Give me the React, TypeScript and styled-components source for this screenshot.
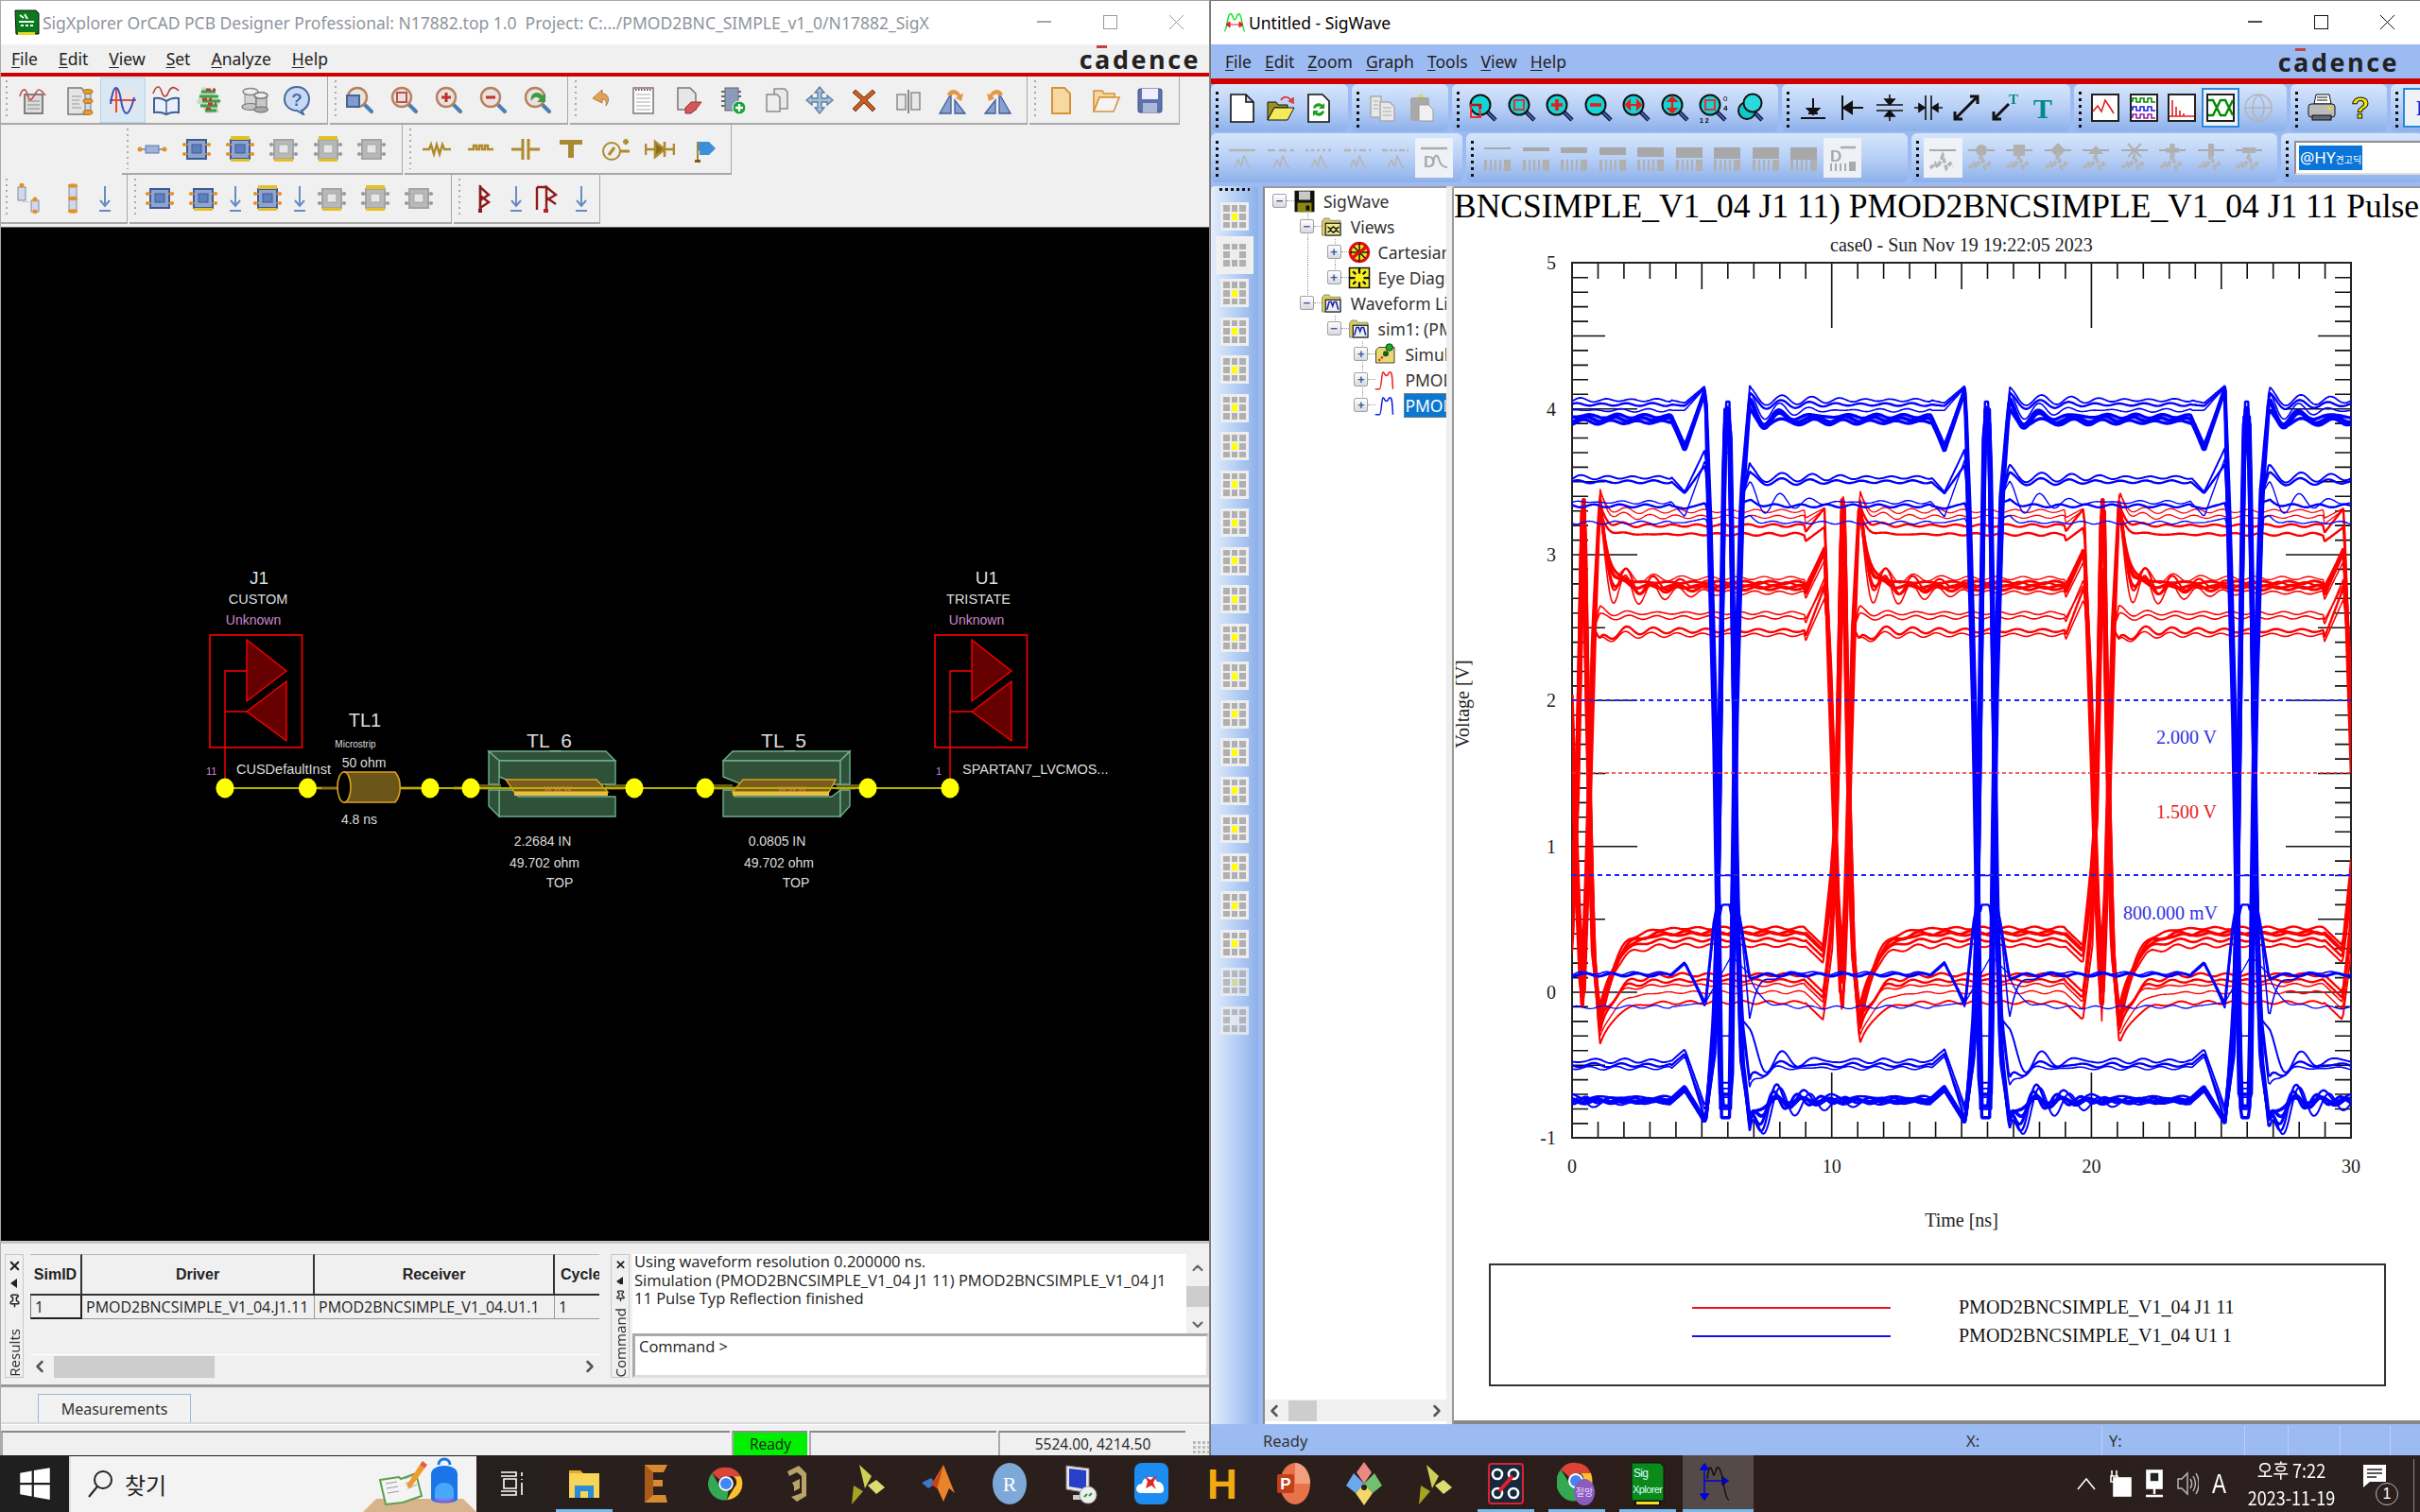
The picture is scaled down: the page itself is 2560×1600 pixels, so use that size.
import React from "react";
import styled, { createGlobalStyle } from "styled-components";
import { ChevronLeft, ChevronRight, ChevronUp, ChevronDown, Pin, X } from "lucide-react";

const SANS = `"Liberation Sans", Arial, sans-serif`;
const UI = `"Noto Sans", "Noto Sans CJK KR", sans-serif`;
const SERIF = `"Liberation Serif", "Times New Roman", serif`;
const BLUE = "#9dbbf3";

const GlobalStyle = createGlobalStyle`
  html, body { margin: 0; padding: 0; background: #000; }
  #root { width: 2560px; height: 1600px; overflow: hidden; }
  * { box-sizing: border-box; }
`;

// ---------- waveform data ----------
type Key = [number, number];
type Trace = { phase: number; base: number; a: number; p: number; t: number; tau?: number; keys: Key[]; w: number; seed: number };

const PX = (t: number) => 1662 + t * 27.47;
const PY = (v: number) => 1050 - v * 154.33;

function sample(tr: Trace, t: number) {
  const s = (((t - tr.phase) % 10) + 10) % 10;
  const k = tr.keys;
  if (s < k[0][0]) {
    const fade = Math.min(1, (k[0][0] - s) / 1.5);
    return (
      tr.base +
      (tr.a * Math.exp(-s / 1.7) * Math.cos((2 * Math.PI * s) / tr.p) + tr.t * Math.exp(-s / (tr.tau ?? 0.3))) * fade +
      0.01 * Math.sin(t * 6.3 + tr.seed)
    );
  }
  for (let i = 0; i < k.length - 1; i++) {
    if (s <= k[i + 1][0]) {
      const f = (s - k[i][0]) / (k[i + 1][0] - k[i][0]);
      return k[i][1] + (k[i + 1][1] - k[i][1]) * f;
    }
  }
  return k[k.length - 1][1];
}

function tracePath(tr: Trace) {
  let d = "";
  for (let t = 0; t <= 30; t += 0.06) {
    d += `${d ? "L" : "M"}${PX(t).toFixed(1)} ${PY(sample(tr, t)).toFixed(1)}`;
  }
  return d;
}

let seedNo = 1;
const jitter = () => ((seedNo % 5) - 2) * 0.025;
const blueHi = (H: number, a: number, dip: number, pre: number, bot: number, w: number): Trace => {
  const j = jitter();
  const peak = Math.min(4.17, H + pre);
  const mix = (v: number) => Math.min(v, peak);
  return {
    phase: 6.84, base: H, a, p: 1.2, t: 0.04, w, seed: seedNo++,
    keys: [
      [7, H], [7.5, H + dip], [8.3, peak], [8.45 + j, mix(3.2)], [8.66 + j, mix(1.8)], [8.78 + j, mix(0.5)], [8.88 + j, bot],
      [9.28 - j, bot], [9.36 - j, mix(0.5)], [9.48 - j, mix(2)], [9.71 - j, mix(3.4)], [10, H + a + 0.04],
    ],
  };
};
const blueLo = (L: number, a: number, p: number, dip: number, top: number, end: number, w: number): Trace => {
  const j = jitter();
  const low = top > 1;
  return {
    phase: 6.84, base: L, a, p, t: end - L - a, w, seed: seedNo++,
    keys: low
      ? [
          [7, L], [7.5, L + 0.08], [8.3, L + dip], [8.64 + j, L + 0.35], [8.78 + j, 0.6], [8.92 + j, 2.4], [9.06 + j, top],
          [9.22 - j, top], [9.36 - j, 2.4], [9.5 - j, 0.6], [9.68 - j, L + 0.3], [10, end],
        ]
      : [[7, L], [8.3, L + 0.03], [9.3, top], [10, end]],
  };
};
const redHi = (H: number, a: number, pre: number, bot: number, end: number, w: number): Trace => {
  const j = jitter();
  return {
    phase: 1.07, base: H, a, p: 1.02, t: end - H - a, w, seed: seedNo++,
    keys: [
      [7.9, H - 0.05], [8.65, H + pre], [8.85 + j, 2.2], [9 + j, 1.4], [9.15 + j, 0.6], [9.3 + j, bot], [9.36 - j, bot],
      [9.5 - j, 0.7], [9.62 - j, 1.5], [9.78 - j, 2.5], [10, end],
    ],
  };
};
const redLo = (L: number, top: number, end: number, w: number): Trace => {
  const j = jitter();
  return {
    phase: 1.07, base: L, a: 0.025, p: 1.1, t: end - L - 0.025, tau: 0.55, w, seed: seedNo++,
    keys: [
      [7.9, L], [8.6, L - 0.12], [8.95 + j, L + 0.4], [9.1 + j, 1.2], [9.22 + j, 2.2], [9.33 + j, top], [9.4 - j, top],
      [9.5 - j, 2.2], [9.62 - j, 1.2], [9.75 - j, 0.3], [10, end],
    ],
  };
};

const redTraces: Trace[] = [
  redHi(3.3, 0.02, 0.02, -0.1, 3.42, 1.3),
  redHi(3.26, 0.03, 0.05, 0.1, 3.45, 1.3),
  redHi(3.2, 0.03, 0.12, 0.05, 3.35, 2.4),
  redHi(3.14, 0.03, 0.05, -0.05, 3.3, 2.4),
  redHi(2.84, 0.1, 0.2, 0, 3.38, 1.4),
  redHi(2.8, 0.16, 0.25, -0.1, 3.42, 2.2),
  redHi(2.77, 0.08, 0.26, 0.1, 3.36, 3),
  redHi(2.74, 0.18, 0.22, -0.2, 3.3, 1.6),
  redHi(2.78, 0.03, 0.24, 0.2, 3.4, 3.4),
  redHi(2.81, 0.02, 0.24, 0, 3.4, 3),
  redHi(2.6, 0.04, 0.2, -0.1, 2.66, 1.6),
  redHi(2.57, 0.02, 0.27, 0.1, 2.6, 1.6),
  redHi(2.48, 0.04, 0.3, 0, 2.42, 2.4),
  redHi(2.45, 0.03, 0.25, 0.15, 2.42, 1.6),
  redLo(0.44, 3.3, -0.2, 2.4),
  redLo(0.4, 3.38, -0.26, 3),
  redLo(0.36, 3.2, -0.1, 2.6),
  redLo(0.32, 3.4, -0.12, 2),
  redLo(0.12, 3.0, -0.28, 2.4),
  redLo(0.08, 3.3, -0.2, 2.4),
  redLo(0.05, 2.9, -0.16, 1.6),
  redLo(-0.0, 3.1, -0.3, 1.4),
  redLo(-0.07, 3.3, -0.35, 2),
  redLo(0.41, 3.35, -0.2, 3.2),
];

const blueTraces: Trace[] = [
  blueHi(4.06, 0.06, -0.02, 0.1, -0.72, 1.8),
  blueHi(4.03, 0.04, -0.01, 0.12, -0.8, 2.4),
  blueHi(3.99, 0.08, 0, 0.16, -0.66, 1.6),
  blueHi(3.95, 0.08, -0.2, 0.18, -0.86, 3.4),
  blueHi(3.93, 0.1, -0.22, 0.2, -0.78, 4),
  blueHi(3.91, 0.06, -0.18, 0.24, -0.7, 3.4),
  blueHi(3.53, 0.06, -0.1, 0.2, -0.62, 2),
  blueHi(3.5, 0.03, -0.08, 0.12, -0.7, 2.4),
  blueHi(3.36, 0.1, -0.1, 0.3, -0.3, 1.4),
  blueHi(3.335, 0, -0.02, 0.02, 0.6, 2.4),
  blueHi(3.22, 0.01, 0, 0.03, 0.8, 1.4),
  blueLo(0.12, 0.0, 1, -0.2, 4.0, 0.1, 3),
  blueLo(0.13, 0.03, 2, -0.24, 3.9, -0.18, 1.6),
  blueLo(-0.1, 0.03, 7, 0.03, 0.25, 0.12, 1.3),
  blueLo(-0.47, 0.12, 1.3, -0.32, 3.9, -0.25, 2),
  blueLo(-0.5, 0.06, 1.3, -0.38, 3.95, -0.6, 2.4),
  blueLo(-0.52, 0.04, 1.2, -0.3, 3.7, -0.65, 1.6),
  blueLo(-0.72, 0.2, 1.06, -0.15, 4.05, -0.95, 2.4),
  blueLo(-0.74, 0.14, 0.94, -0.15, 3.95, -0.88, 3),
  blueLo(-0.76, 0.22, 1.16, -0.14, 4.02, -0.9, 2),
  blueLo(-0.75, 0.08, 1.0, -0.15, 3.9, -0.86, 3.6),
  blueLo(-0.74, 0.02, 1.0, -0.15, 3.85, -0.9, 3.6),
];

function tickPaths() {
  let d = "";
  for (let i = 1; i < 60; i++) {
    const y = PY(i / 10 - 1).toFixed(1);
    const len = i % 10 === 0 ? 69 : i % 5 === 0 ? 35 : 17;
    d += `M1662 ${y}h${len}M2486 ${y}h-${len}`;
  }
  for (let i = 1; i < 30; i++) {
    const x = PX(i).toFixed(1);
    const len = i % 10 === 0 ? 69 : i % 5 === 0 ? 28 : 17;
    d += `M${x} 278v${len}M${x} 1204v-${len}`;
  }
  return d;
}

// ---------- small drawings ----------
const Svg = styled.svg<{ $s?: number }>`
  width: ${(p) => p.$s ?? 32}px;
  height: ${(p) => p.$s ?? 32}px;
  display: block;
  flex: none;
  filter: blur(0.35px);
`;

const magL = (inner: React.ReactNode) => (
  <>
    <path d="M19 19l9 9" stroke="#4d7eb5" strokeWidth="4" strokeLinecap="round" />
    <circle cx="13" cy="13" r="10" fill="#e9e3df" stroke="#b8805c" strokeWidth="2.4" />
    {inner}
  </>
);
const magR = (inner: React.ReactNode) => (
  <>
    <path d="M19 19l10 10" stroke="#111" strokeWidth="4.5" />
    <path d="M19 19l10 10" stroke="#3c5fd0" strokeWidth="2" />
    <circle cx="13" cy="13" r="10.5" fill="#14d4d4" stroke="#111" strokeWidth="2" />
    {inner}
  </>
);
const chip = (c: string, bar: string, pos: "t" | "b" | "tb" | "" = "") => {
  const body = c === "b" ? "#8fa4cf" : "#b8b8b8";
  const line = c === "b" ? "#3e5a94" : "#a4a4a4";
  const pad = c === "b" ? "#e0922a" : "#9a9a9a";
  return (
    <>
      <rect x="6" y="6" width="20" height="20" fill={body} stroke={line} strokeWidth="2" />
      <rect x="11" y="11" width="10" height="9" fill={c === "b" ? "#5f7fbf" : "#e6e6e6"} stroke={line} />
      <path d="M1 11h6M1 21h6M25 11h6M25 21h6" stroke={pad} strokeWidth="1.4" />
      <circle cx="3" cy="11" r="2" fill={pad} />
      <circle cx="3" cy="21" r="2" fill={pad} />
      <circle cx="29" cy="11" r="2" fill={pad} />
      <circle cx="29" cy="21" r="2" fill={pad} />
      {pos.includes("t") && <rect x="6" y="2" width="20" height="4" fill={bar} />}
      {pos.includes("b") && <rect x="6" y="26" width="20" height="3" fill={bar} />}
    </>
  );
};
const vWave = "M8 26c2-1 3-8 4-8s2 7 3 7 2-11 3-11 3 9 5 11 2 2 3 2";
const lineWave = (top: React.ReactNode) => (
  <>
    {top}
    <path d={vWave} fill="none" stroke="#b4b4b4" strokeWidth="1.6" />
  </>
);
const widthIcon = (h: number) => (
  <>
    <rect x="2" y={5} width="28" height={h} fill="#a8a8a8" />
    <path d="M2 18h3v12H2zM8 18h2v12H8zM13 18h2v12h-2zM18 18h2v12h-2zM23 18h7v12h-7z" fill="#b0b0b0" />
  </>
);
const symbolWave = (top: React.ReactNode) => (
  <>
    <path d="M2 8h28" stroke="#aaa" strokeWidth="2" />
    {top}
    <path d="M3 27l5-5 3 4 5-12 4 13 4-5 3 3" fill="none" stroke="#b4b4b4" strokeWidth="3.6" strokeDasharray="5 2" />
  </>
);

const ICONS: Record<string, React.ReactNode> = {
  noteWave: (
    <>
      <rect x="7" y="10" width="19" height="20" fill="#dcdcdc" stroke="#666" strokeWidth="1.6" />
      <path d="M10 17h13M10 21h13M10 25h13" stroke="#888" />
      <path d="M2 12c2-8 6-10 8-2s4 6 6 3 4-8 6-8 4 2 7 6" fill="none" stroke="#c0504d" strokeWidth="1.6" />
    </>
  ),
  docChip: (
    <>
      <path d="M4 3h14l5 5v23H4z" fill="#e4e4e4" stroke="#777" strokeWidth="1.5" />
      <path d="M8 12h10M8 16h8M8 20h8M8 24h10" stroke="#999" />
      <rect x="22" y="8" width="6" height="20" fill="#cfd8ee" stroke="#678" />
      <ellipse cx="25" cy="7" rx="5" ry="2.4" fill="#e8a02c" stroke="#a86a10" />
      <ellipse cx="25" cy="17" rx="5" ry="2.4" fill="#e8a02c" stroke="#a86a10" />
      <ellipse cx="25" cy="29" rx="5" ry="2.4" fill="#e8a02c" stroke="#a86a10" />
    </>
  ),
  sine: (
    <>
      <rect x="2" y="3" width="28" height="26" fill="#e6e6e6" />
      <path d="M2 16h28" stroke="#e8493a" strokeWidth="2" />
      <path d="M9 3v26" stroke="#e8493a" strokeWidth="2" />
      <path d="M3 20c3-22 8-22 11-4s8 20 14-3" fill="none" stroke="#2f54c4" strokeWidth="2" />
    </>
  ),
  book: (
    <>
      <path d="M3 14c5-1 9 0 13 3 4-3 8-4 13-3v15c-5-1-9 0-13 2-4-2-8-3-13-2z" fill="#eaf0fa" stroke="#3e5f98" strokeWidth="2" />
      <path d="M16 17v13" stroke="#3e5f98" strokeWidth="1.5" />
      <path d="M2 9c3-9 7-9 9-2s5 6 7 1 5-8 11-2" fill="none" stroke="#b4443c" strokeWidth="1.6" />
    </>
  ),
  stack: (
    <>
      <path d="M8 2l14 4-2 6 8 4-4 7 2 6-14 1-4-8-6-3 3-8z" fill="#c7d9c0" />
      <path d="M7 7h15M5 12h20M8 17h19M6 22h18M11 27h12" stroke="#3aa04a" strokeWidth="3" />
      <path d="M12 5h10M8 15h10M14 20h9M12 25h7" stroke="#b83c34" strokeWidth="3" strokeDasharray="5 2" />
    </>
  ),
  spools: (
    <>
      <path d="M7 7v15c0 3 12 3 12 0V7" fill="#d4d4d4" stroke="#888" />
      <ellipse cx="13" cy="7" rx="8" ry="3.5" fill="#eee" stroke="#888" strokeWidth="1.5" />
      <ellipse cx="13" cy="23" rx="9" ry="3.5" fill="#c4c4c4" stroke="#777" strokeWidth="1.2" />
      <path d="M19 11v15c0 3 11 3 11 0V11" fill="#c8c8c8" stroke="#666" />
      <ellipse cx="24" cy="11" rx="7" ry="3.2" fill="#eee" stroke="#777" strokeWidth="1.5" />
      <ellipse cx="24" cy="26" rx="7.5" ry="3" fill="#a8a8a8" stroke="#666" />
    </>
  ),
  help: (
    <>
      <path d="M16 2c8 0 13 6 13 13s-5 11-8 12l2 4-7-4C9 27 3 22 3 15S8 2 16 2z" fill="#c9d9f3" stroke="#46699e" strokeWidth="2" />
      <text x="16" y="22" textAnchor="middle" fontFamily={SANS} fontWeight="700" fontSize="19" fill="#476fa8">?</text>
    </>
  ),
  zArea: magL(<rect x="2" y="11" width="13" height="12" fill="#7f9ccc" stroke="#45639a" strokeWidth="2" />),
  zBox: magL(<rect x="8" y="8" width="10" height="10" fill="none" stroke="#c0504d" strokeWidth="2" />),
  zIn: magL(<path d="M8 13h10M13 8v10" stroke="#c0302a" strokeWidth="3" />),
  zOut: magL(<path d="M8 13h10" stroke="#c0302a" strokeWidth="3" />),
  zBack: magL(<path d="M9 17c-2-8 6-12 12-6l3-2v9h-9l3-3c-3-4-7-2-9 2z" fill="#3f9a44" />),
  undo: <path d="M20 5L10 14l10 5v-4c4 0 5 3 4 7 5-7 2-13-4-13z" fill="#e2a25b" stroke="#b37636" />,
  notes: (
    <>
      <rect x="6" y="3" width="21" height="27" fill="#fff" stroke="#777" strokeWidth="1.5" />
      <path d="M9 10h15M9 14h15M9 18h15M9 22h15M9 26h15" stroke="#aaa" />
      <path d="M8 5h17" stroke="#8f3b52" strokeWidth="2" strokeDasharray="1.5 1.5" />
    </>
  ),
  erase: (
    <>
      <path d="M6 3h13l6 6v17H6z" fill="#e6e6e6" stroke="#777" strokeWidth="1.5" />
      <path d="M14 24l6-6h11l-6 8-5 4H14z" fill="#d2565a" stroke="#9a3033" />
    </>
  ),
  addChip: (
    <>
      <rect x="9" y="3" width="14" height="24" fill="#8a9cba" stroke="#666" />
      <path d="M5 7h4M5 12h4M5 17h4M5 22h4M23 7h3M23 12h3" stroke="#666" strokeWidth="2" />
      <circle cx="24" cy="24" r="7" fill="#18a338" stroke="#fff" />
      <path d="M20 24h8M24 20v8" stroke="#fff" strokeWidth="2.4" />
    </>
  ),
  copyDoc: (
    <>
      <path d="M14 4h11l3 3v18H14z" fill="#e8e8e8" stroke="#8a8a8a" strokeWidth="1.5" />
      <path d="M6 10h11l3 3v15H6z" fill="#eee" stroke="#8a8a8a" strokeWidth="1.5" />
    </>
  ),
  move: <path d="M16 2l5 6h-3v6h6v-3l6 5-6 5v-3h-6v6h3l-5 6-5-6h3v-6H8v3l-6-5 6-5v3h6V8h-3z" fill="#a8c0dc" stroke="#5a7da4" strokeWidth="1.3" />,
  del: <path d="M7 5l9 8 9-8 3 3-9 8 9 9-3 3-9-9-9 9-3-3 9-9-9-8z" fill="#c35f24" stroke="#7a3a15" />,
  mirror: (
    <>
      <path d="M4 10h9v16H4zM19 8h9v18h-9z" fill="#e8e8e8" stroke="#8a8a8a" strokeWidth="1.5" />
      <path d="M16 5v25" stroke="#666" strokeWidth="1.5" />
    </>
  ),
  rotL: (
    <>
      <path d="M14 9L2 30h12zM18 16l11 14H18z" fill="#86a0d0" stroke="#3f5d98" strokeWidth="1.3" />
      <path d="M10 10c2-6 10-7 14 0l3-1-2 8-6-3 2-2c-2-3-6-3-8 0z" fill="#e49a44" />
    </>
  ),
  rotR: (
    <>
      <path d="M18 9l12 21H18zM14 16L3 30h11z" fill="#86a0d0" stroke="#3f5d98" strokeWidth="1.3" />
      <path d="M22 10c-2-6-10-7-14 0l-3-1 2 8 6-3-2-2c2-3 6-3 8 0z" fill="#e49a44" />
    </>
  ),
  newL: <path d="M7 3h13l6 6v21H7z" fill="#f6d9a0" stroke="#d8913a" strokeWidth="2" />,
  openL: (
    <>
      <path d="M4 28V6h9l2 3h11v4H10L4 28z" fill="#f3d79f" stroke="#d8913a" strokeWidth="1.6" />
      <path d="M10 13h21l-6 15H4z" fill="#f4f4f4" stroke="#d8913a" strokeWidth="1.6" />
    </>
  ),
  saveL: (
    <>
      <rect x="4" y="4" width="25" height="25" rx="2" fill="#5e73ad" stroke="#3a4c88" />
      <rect x="8" y="4" width="17" height="11" fill="#eef" />
      <rect x="9" y="19" width="15" height="10" fill="#aab8d8" />
    </>
  ),
  wireChip: (
    <>
      <path d="M1 16h30" stroke="#8aa0c8" strokeWidth="2" />
      <rect x="9" y="12" width="14" height="8" fill="#9fb2d8" stroke="#5d7ab0" />
      <circle cx="3" cy="16" r="2.5" fill="#e0922a" />
      <circle cx="29" cy="16" r="2.5" fill="#e0922a" />
    </>
  ),
  chipB: chip("b", "#e3c02a"),
  chipBb: chip("b", "#e3c02a", "b"),
  chipBt: chip("b", "#e3c02a", "tb"),
  chipG: chip("g", "#e3c02a", "b"),
  chipGt: chip("g", "#e3c02a", "tb"),
  chipG0: chip("g", "#e3c02a"),
  res: <path d="M1 16h7l2-5 3 10 3-10 3 10 3-10 2 5h7" fill="none" stroke="#ae8a2a" strokeWidth="2.4" />,
  res2: <path d="M2 16h6v-4h3v4h3v-4h3v4h3v-4h3v4h6" fill="none" stroke="#ae8a2a" strokeWidth="2.4" />,
  cap: <path d="M1 16h12M13 5v22M19 5v22M19 16h12" fill="none" stroke="#ae8a2a" strokeWidth="3" />,
  gnd: <path d="M4 6h24v5H19v14h-6V11H4z" fill="#a98a34" />,
  xfmr: (
    <>
      <circle cx="12" cy="18" r="9" fill="none" stroke="#ae8a2a" strokeWidth="2" />
      <path d="M20 18h11M9 22l6-8M24 8h6M27 5v6" stroke="#ae8a2a" strokeWidth="3" />
    </>
  ),
  diode: <path d="M1 16h10M11 8l10 8-10 8zM21 8v16M21 16h10M1 10v12M31 10v12" fill="#8a6b1c" stroke="#ae8a2a" strokeWidth="2.6" />,
  flag: (
    <>
      <path d="M9 8h12l7 7-7 7H11v-5l-2 2z" fill="#3d8fd8" />
      <path d="M9 8v21" stroke="#9a8a38" strokeWidth="2" />
      <rect x="6" y="27" width="6" height="3" fill="#7a5a1e" />
    </>
  ),
  parDiag: (
    <>
      <rect x="4" y="4" width="8" height="14" fill="#cfd8ee" stroke="#889" />
      <rect x="18" y="18" width="8" height="12" fill="#cfd8ee" stroke="#889" />
      <circle cx="8" cy="2" r="2.5" fill="#e0922a" />
      <circle cx="22" cy="17" r="2.5" fill="#e0922a" />
      <circle cx="22" cy="30" r="2.5" fill="#e0922a" />
      <path d="M9 19c2 1 5 1 8 0" stroke="#aaa" strokeDasharray="2 2" fill="none" />
    </>
  ),
  serChip: (
    <>
      <rect x="12" y="2" width="8" height="28" fill="#cfd8ee" stroke="#889" />
      <ellipse cx="16" cy="2.5" rx="5" ry="2.2" fill="#e0922a" />
      <ellipse cx="16" cy="16" rx="5" ry="2.2" fill="#e0922a" />
      <ellipse cx="16" cy="29.500" rx="5" ry="2.2" fill="#e0922a" />
    </>
  ),
  down: <path d="M16 3v20M11 18l5 6 5-6M10 29h12" fill="none" stroke="#6a8cbc" strokeWidth="2" />,
  tri1: (
    <>
      <path d="M12 2v27" stroke="#8e1b1b" strokeWidth="2.4" />
      <path d="M12 4l9 8-9 6zM21 20l-9-7v13z" fill="none" stroke="#8e1b1b" strokeWidth="2.4" />
      <rect x="10" y="27" width="4" height="4" fill="#8e1b1b" />
    </>
  ),
  tri2: (
    <>
      <path d="M5 4h10v20M5 4v24M15 4l10 8-10 6zM25 22l-10-7v13" fill="none" stroke="#8e1b1b" strokeWidth="2.4" />
      <rect x="12" y="27" width="5" height="4" fill="#b52020" />
    </>
  ),
  // sigwave
  newDoc: <path d="M4 2h16l8 8v21H4zM20 2v8h8" fill="#fff" stroke="#111" strokeWidth="1.6" />,
  openDoc: (
    <>
      <path d="M2 29V10h9l2 3h10v3H9L2 29z" fill="#9c9020" stroke="#111" />
      <path d="M9 16h21l-7 13H2z" fill="#f4ea5c" stroke="#111" />
      <path d="M16 8c3-5 7-4 11 0l-2 1 4 2v-5l-2 1" fill="none" stroke="#e03030" strokeWidth="1.6" />
    </>
  ),
  refresh: (
    <>
      <path d="M5 2h15l7 7v22H5z" fill="#fff" stroke="#111" strokeWidth="1.6" />
      <path d="M10 16c1-5 7-6 10-3l2-2v6h-6l2-2c-2-1-5 0-6 2zM22 20c-1 5-7 6-10 3l-2 2v-6h6l-2 2c2 1 5 0 6-2z" fill="#1ea01e" />
    </>
  ),
  copyGray: (
    <>
      <path d="M3 4h11v22H3z" fill="#e8e8e8" stroke="#aaa" strokeWidth="1.5" />
      <path d="M13 10h10l5 5v15H13z" fill="#e8e8e8" stroke="#aaa" strokeWidth="1.5" />
      <path d="M16 16h9M16 20h9M16 24h9M6 9h5M6 13h5M6 17h5" stroke="#aaa" />
    </>
  ),
  pasteGray: (
    <>
      <rect x="4" y="5" width="20" height="25" rx="2" fill="#a8a8a8" />
      <path d="M11 5l4-4 4 4z" fill="#d8d84a" />
      <path d="M13 13h10l5 5v12H13z" fill="#f0f0f0" stroke="#999" />
    </>
  ),
  m1: magR(
    <>
      <path d="M12 13H3v13h10z" fill="none" stroke="#e53030" strokeWidth="2" />
      <path d="M3 13h10v4" stroke="#c01010" strokeWidth="2.5" fill="none" />
    </>
  ),
  m2: magR(<rect x="8" y="8" width="10" height="10" fill="none" stroke="#e53030" strokeWidth="2" />),
  m3: magR(<path d="M7 13h12M13 7v12" stroke="#e02020" strokeWidth="3.6" />),
  m4: magR(<path d="M7 13h12" stroke="#e02020" strokeWidth="3.6" />),
  m5: magR(<path d="M5 13h16M5 13l4-4v8zM21 13l-4-4v8z" stroke="#e02020" strokeWidth="2.2" fill="#e02020" />),
  m6: magR(<path d="M13 5v16M13 5l-4 4h8zM13 21l-4-4h8z" stroke="#e02020" strokeWidth="2.2" fill="#e02020" />),
  m7: (
    <>
      {magR(<rect x="8" y="8" width="10" height="10" fill="none" stroke="#e53030" strokeWidth="2" />)}
      <text x="27" y="9" fontSize="8" fontFamily={SANS}>0</text>
      <text x="27" y="19" fontSize="8" fontFamily={SANS} fontWeight="700">4</text>
      <text x="2" y="32" fontSize="7" fontFamily={SANS} fontWeight="700">1 2</text>
    </>
  ),
  m8: (
    <>
      <path d="M18 20l9 9" stroke="#111" strokeWidth="4.5" />
      <path d="M18 20l9 9" stroke="#3c5fd0" strokeWidth="2" />
      <circle cx="11" cy="19" r="9" fill="#14c8c8" stroke="#111" strokeWidth="2" />
      <circle cx="17" cy="11" r="9.5" fill="#2adada" stroke="#111" strokeWidth="2" />
    </>
  ),
  cLow: <path d="M16 6v16M10 17l6 6 6-6zM3 27h26M11 22h10" fill="#111" stroke="#111" strokeWidth="2" />,
  cLeft: <path d="M6 3v26M7 16l9-6v12zM16 16h12" fill="#111" stroke="#111" strokeWidth="2" />,
  cH: <path d="M2 13h28M2 19h28M16 2v9M16 21v9M11 7l5 6 5-6zM11 25l5-6 5 6z" fill="#111" stroke="#111" strokeWidth="1.6" />,
  cV: <path d="M13 3v26M19 3v26M1 16h10M21 16h10M6 12l6 4-6 4zM26 12l-6 4 6 4z" fill="#111" stroke="#111" strokeWidth="1.6" />,
  cDiag: <path d="M4 28L28 4M20 4h8v8M4 20v8h8" fill="none" stroke="#111" strokeWidth="3" />,
  cDiagT: (
    <>
      <path d="M4 28l16-16M4 20v8h8" fill="none" stroke="#111" strokeWidth="3" />
      <text x="20" y="12" fontFamily={SERIF} fontWeight="700" fontSize="15" fill="#008a8a">T</text>
    </>
  ),
  tText: <text x="16" y="27" textAnchor="middle" fontFamily={SERIF} fontWeight="700" fontSize="30" fill="#008a8a">T</text>,
  gWave: (
    <>
      <rect x="2" y="2" width="28" height="28" fill="#fff" stroke="#222" strokeWidth="2" />
      <path d="M3 20l5-6 4 6 4-12 4 6 5 8" fill="none" stroke="#e02020" strokeWidth="1.6" />
    </>
  ),
  gBus: (
    <>
      <rect x="2" y="2" width="28" height="28" fill="#fff" stroke="#222" strokeWidth="2" />
      <path d="M4 10V6h4v4h4V6h4v4h4V6h4v4h4" fill="none" stroke="#008a00" strokeWidth="1.6" />
      <path d="M4 19v-4h4v4h4v-4h4v4h4v-4h4v4h4" fill="none" stroke="#2020e0" strokeWidth="1.6" />
      <path d="M4 27v-4h4v4h4v-4h4v4h4v-4h4v4h4" fill="none" stroke="#9020a0" strokeWidth="1.6" />
    </>
  ),
  gSpec: (
    <>
      <rect x="2" y="2" width="28" height="28" fill="#fff" stroke="#222" strokeWidth="2" />
      <path d="M3 25h26M6 25V8M10 25V15M14 25v-6M18 25v-3" stroke="#e02020" strokeWidth="1.6" />
    </>
  ),
  gEye: (
    <>
      <rect x="2" y="2" width="28" height="28" fill="#fff" stroke="#222" strokeWidth="2" />
      <path d="M3 8h5l8 16h5l8-16M3 24h5l8-16h5l8 16" fill="none" stroke="#008a00" strokeWidth="2.4" />
    </>
  ),
  gPolar: (
    <g fill="none" stroke="#b4b4b4" strokeWidth="1.5">
      <circle cx="16" cy="16" r="14" />
      <path d="M2 16h28M16 2c-8 8-8 20 0 28M16 2c8 8 8 20 0 28" />
    </g>
  ),
  print: (
    <>
      <path d="M10 2h14l2 10H8z" fill="#fff" stroke="#111" />
      <path d="M11 5h11M11 8h11" stroke="#111" />
      <rect x="2" y="12" width="28" height="14" rx="3" fill="#bbb" stroke="#111" />
      <rect x="6" y="24" width="20" height="5" fill="#667" stroke="#111" />
      <rect x="22" y="15" width="5" height="3" fill="#e8d820" />
    </>
  ),
  qHelp: <text x="16" y="27" textAnchor="middle" fontFamily={SANS} fontWeight="700" fontSize="32" fill="#f2e400" stroke="#111">?</text>,
  r: <text x="10" y="24" fontFamily={SERIF} fontWeight="700" fontSize="24" fill="#2020e0">R</text>,
  dash1: lineWave(<path d="M2 8h28" stroke="#b4b4b4" strokeWidth="2.4" />),
  dash2: lineWave(<path d="M2 8h28" stroke="#b4b4b4" strokeWidth="2.4" strokeDasharray="8 4" />),
  dash3: lineWave(<path d="M2 8h28" stroke="#b4b4b4" strokeWidth="2.4" strokeDasharray="3 3" />),
  dash4: lineWave(<path d="M2 8h28" stroke="#b4b4b4" strokeWidth="2.4" strokeDasharray="7 3 3 3" />),
  dash5: lineWave(<path d="M2 8h28" stroke="#b4b4b4" strokeWidth="2.4" strokeDasharray="6 2 3 2 3 2" />),
  dW: (
    <>
      <path d="M2 6h28" stroke="#aaa" strokeWidth="2.4" />
      <text x="5" y="26" fontFamily={SANS} fontWeight="700" fontSize="17" fill="#aaa">D</text>
      <path d="M15 20c3-12 6-4 7 0s5 6 8 6" fill="none" stroke="#aaa" strokeWidth="2" />
    </>
  ),
  w1: widthIcon(2),
  w2: widthIcon(4),
  w3: widthIcon(6),
  w4: widthIcon(8),
  w5: widthIcon(10),
  w6: widthIcon(11),
  w7: widthIcon(12),
  w8: widthIcon(12),
  w9: widthIcon(13),
  dD: (
    <>
      <path d="M14 5h16" stroke="#aaa" strokeWidth="2.4" />
      <text x="3" y="20" fontFamily={SANS} fontWeight="700" fontSize="17" fill="#aaa">D</text>
      <path d="M3 22h2v8H3zM8 22h2v8H8zM13 22h2v8h-2zM18 22h2v8h-2zM23 20h7v10h-7z" fill="#aaa" />
    </>
  ),
  sLine: symbolWave(null),
  sCircle: symbolWave(<circle cx="16" cy="8" r="6" fill="#b0b0b0" />),
  sSquare: symbolWave(<rect x="10" y="2" width="12" height="12" fill="#b0b0b0" />),
  sDia: symbolWave(<path d="M16 0l8 8-8 8-8-8z" fill="#b0b0b0" />),
  sTri: symbolWave(<path d="M8 12l8-9 8 9z" fill="#b0b0b0" />),
  sX: symbolWave(<path d="M9 1l14 14M23 1L9 15" stroke="#b0b0b0" strokeWidth="2.2" />),
  sPlus: symbolWave(<path d="M16 1v14M9 8h14" stroke="#b0b0b0" strokeWidth="5" />),
  sBar: symbolWave(<rect x="13" y="1" width="6" height="14" fill="#b0b0b0" />),
  sMinus: symbolWave(<rect x="9" y="5" width="14" height="6" fill="#b0b0b0" />),
};

const Icon = ({ name, size }: { name: string; size?: number }) => (
  <Svg $s={size} viewBox="0 0 32 32">
    {ICONS[name]}
  </Svg>
);

// ---------- layout ----------
const Desktop = styled.div`
  width: 2560px;
  height: 1600px;
  display: flex;
  flex-direction: column;
  font-family: ${SANS};
`;
const Windows = styled.div`
  display: flex;
  height: 1540px;
`;
const LeftWin = styled.div`
  width: 1280px;
  display: flex;
  flex-direction: column;
  background: #f0f0f0;
  border-top: 1px solid #aaa;
  border-left: 1px solid #aaa;
  border-right: 1px solid #888;
`;
const RightWin = styled.div`
  width: 1280px;
  display: flex;
  flex-direction: column;
  background: ${BLUE};
  border-top: 1px solid #777;
  border-left: 1px solid #777;
`;
const TitleBar = styled.div`
  height: 46px;
  flex: none;
  background: #fff;
  display: flex;
  align-items: center;
  padding-left: 13px;
`;
const TitleText = styled.span<{ $dim?: boolean }>`
  font-family: ${UI};
  font-size: 17.5px;
  margin-left: 3px;
  white-space: pre;
  color: ${(p) => (p.$dim ? "#8f959c" : "#000")};
`;
const Caption = styled.div<{ $dim?: boolean }>`
  margin-left: auto;
  margin-right: 27px;
  display: flex;
  align-items: center;
  gap: 55px;
  margin-top: -2px;
  color: ${(p) => (p.$dim ? "#a0a0a0" : "#000")};
`;
const MenuBar = styled.div<{ $h: number; $bg: string; $pad: number }>`
  height: ${(p) => p.$h}px;
  flex: none;
  background: ${(p) => p.$bg};
  display: flex;
  align-items: center;
  padding-left: ${(p) => p.$pad}px;
`;
const MenuItem = styled.span<{ $gap: number }>`
  font-family: ${UI};
  font-size: 17.5px;
  color: #222;
  margin-right: ${(p) => p.$gap}px;
`;
const Key = styled.span`
  text-decoration: underline;
  text-underline-offset: 2px;
`;
const Logo = styled.span<{ $right: number; $top: number }>`
  position: relative;
  margin-left: auto;
  margin-right: ${(p) => p.$right}px;
  margin-top: ${(p) => p.$top}px;
  font-family: "Open Sans", ${SANS};
  font-weight: 700;
  font-size: 27px;
  line-height: 1;
  letter-spacing: 2.5px;
  color: #222;
  &::before {
    content: "";
    position: absolute;
    left: 18px;
    top: -1px;
    width: 11px;
    height: 3px;
    background: #c84040;
  }
`;
const RedLine = styled.div<{ $h: number }>`
  height: ${(p) => p.$h}px;
  flex: none;
  background: #d10000;
`;
const ToolRow = styled.div<{ $h: number; $indent?: number; $top?: number }>`
  height: ${(p) => p.$h}px;
  flex: none;
  display: flex;
  padding-left: ${(p) => p.$indent ?? 0}px;
  padding-top: ${(p) => p.$top ?? 0}px;
`;
const GrayGroup = styled.div<{ $w: number; $pad: number }>`
  width: ${(p) => p.$w}px;
  height: 100%;
  flex: none;
  display: flex;
  align-items: center;
  padding-left: ${(p) => p.$pad}px;
  margin-right: 2px;
  border-right: 1px solid #a8a8a8;
  border-bottom: 2px solid #a8a8a8;
  position: relative;
  &::before {
    content: "";
    position: absolute;
    left: 5px;
    top: 4px;
    bottom: 4px;
    width: 2px;
    background: repeating-linear-gradient(to bottom, #aaa 0 2px, transparent 2px 6px);
  }
`;
const Cell = styled.span<{ $w: number; $on?: boolean }>`
  width: ${(p) => p.$w}px;
  height: 46px;
  flex: none;
  display: flex;
  align-items: center;
  justify-content: center;
  background: ${(p) => (p.$on ? "#d8e8f4" : "transparent")};
  outline: ${(p) => (p.$on ? "1px solid #b8d4ea" : "none")};
`;
const BlueGroup = styled.div<{ $w: number; $pad: number }>`
  width: ${(p) => p.$w}px;
  height: 100%;
  flex: none;
  display: flex;
  align-items: center;
  padding-left: ${(p) => p.$pad}px;
  margin-right: 4px;
  border-radius: 6px;
  background: linear-gradient(to bottom, #d6e6fc, #b8d0f6 50%, #8db0ea);
  position: relative;
  &::before {
    content: "";
    position: absolute;
    left: 5px;
    top: 8px;
    bottom: 4px;
    width: 3px;
    background: repeating-linear-gradient(to bottom, #111 0 3px, transparent 3px 7px);
  }
`;
const BlueCell = styled.span<{ $on?: boolean; $sel?: boolean }>`
  width: 40.5px;
  height: 42px;
  flex: none;
  display: flex;
  align-items: center;
  justify-content: center;
  background: ${(p) => (p.$on || p.$sel ? "#eef1f6" : "transparent")};
  border: ${(p) => (p.$sel ? "2px solid #2a88dd" : "none")};
`;
const FontField = styled.div`
  width: 140px;
  height: 36px;
  margin-left: 1px;
  background: #fff;
  border: 2px solid #8e8e8e;
  border-right: none;
  border-bottom-color: #ddd;
  padding: 3px;
  display: flex;
`;
const Selected = styled.span`
  background: #0a74d8;
  color: #fff;
  font-family: ${UI};
  font-size: 17px;
  line-height: 26px;
  height: 26px;
  padding: 0 1px;
  white-space: nowrap;
  & small {
    font-size: 10px;
  }
`;
const Canvas = styled.div`
  height: 1073px;
  flex: none;
  margin: 3px 0 0;
  background: #000;
  border-top: 1px solid #666;
`;
const FullSvg = styled.svg`
  display: block;
  width: 1278px;
  height: 1072px;
`;
const Dock = styled.div`
  height: 155px;
  flex: none;
  display: flex;
  gap: 7px;
  padding: 11px 0 7px 4px;
  border-top: 3px solid #c4c4c4;
  border-bottom: 3px solid #999;
`;
const SideTab = styled.div`
  width: 20px;
  flex: none;
  border: 1px solid #c8c8c8;
  background: #f0f0f0;
  display: flex;
  flex-direction: column;
  align-items: center;
  padding-top: 4px;
  gap: 6px;
  overflow: hidden;
  color: #222;
`;
const SideLabel = styled.span`
  writing-mode: vertical-rl;
  transform: rotate(180deg);
  font-family: ${UI};
  font-size: 15px;
  line-height: 18px;
  margin-top: auto;
  color: #333;
  white-space: nowrap;
`;
const ResultsPane = styled.div`
  width: 634px;
  flex: none;
  display: flex;
  gap: 7px;
`;
const ResultsBody = styled.div`
  width: 602px;
  display: flex;
  flex-direction: column;
`;
const GridRow = styled.div<{ $h: number }>`
  height: ${(p) => p.$h}px;
  flex: none;
  display: grid;
  grid-template-columns: 55px 246px 254px 47px;
  overflow: hidden;
`;
const Head = styled.div`
  display: flex;
  align-items: center;
  justify-content: center;
  font-family: ${SANS};
  font-weight: 700;
  font-size: 16px;
  color: #222;
  white-space: nowrap;
  overflow: hidden;
  border-right: 2px solid #333;
  border-bottom: 2px solid #333;
  border-top: 1px solid #bbb;
  &:last-child {
    border-right: none;
    justify-content: flex-start;
    padding-left: 6px;
  }
`;
const Data = styled.div`
  display: flex;
  align-items: center;
  padding-left: 4px;
  font-family: "Open Sans", ${SANS};
  font-size: 16px;
  color: #222;
  white-space: nowrap;
  overflow: hidden;
  border-right: 1px solid #999;
  border-bottom: 1px solid #999;
  &:first-child {
    border-right: 2px solid #222;
    border-bottom: 2px solid #222;
    border-left: 1px solid #777;
  }
  &:last-child {
    border-right: none;
  }
`;
const HScroll = styled.div`
  margin-top: auto;
  height: 25px;
  flex: none;
  display: flex;
  align-items: center;
  background: #f0f0f0;
  border-top: 1px solid #fff;
  color: #555;
`;
const ScrollThumb = styled.span<{ $w: number; $h: number }>`
  width: ${(p) => p.$w}px;
  height: ${(p) => p.$h}px;
  margin-left: 5px;
  flex: none;
  background: #cdcdcd;
`;
const ScrollGap = styled.span`
  flex: 1;
`;
const CommandPane = styled.div`
  flex: 1;
  display: flex;
  gap: 3px;
`;
const CommandBody = styled.div`
  flex: 1;
  display: flex;
  flex-direction: column;
`;
const LogArea = styled.div`
  flex: 1;
  display: flex;
  background: #fff;
  overflow: hidden;
`;
const LogText = styled.div`
  flex: 1;
  margin-top: -2px;
  padding: 0 0 0 2px;
  font-family: "Open Sans", ${SANS};
  font-size: 16.5px;
  line-height: 19.5px;
  color: #222;
`;
const VScroll = styled.div`
  width: 24px;
  flex: none;
  background: #f0f0f0;
  display: flex;
  flex-direction: column;
  align-items: center;
  color: #666;
  padding-top: 6px;
`;
const VThumb = styled.span`
  width: 24px;
  height: 26px;
  margin: 10px 0 10px;
  background: #cdcdcd;
`;
const CommandBox = styled.div`
  height: 47px;
  flex: none;
  background: #fff;
  border: 3px solid #aaa;
  border-bottom-color: #ddd;
  border-right-color: #ddd;
  padding: 1px 0 0 4px;
  font-family: "Open Sans", ${SANS};
  font-size: 16.5px;
  line-height: 20px;
  color: #222;
`;
const TabRow = styled.div`
  height: 39px;
  flex: none;
  display: flex;
  align-items: flex-end;
  padding-left: 39px;
  border-bottom: 2px solid #d8d8d8;
`;
const TabButton = styled.div`
  width: 162px;
  height: 30px;
  display: flex;
  align-items: center;
  justify-content: center;
  border: 1px solid #9ab8d4;
  border-bottom: none;
  background: #f2f2f2;
  font-family: ${UI};
  font-size: 16px;
  color: #333;
`;
const StatusRow = styled.div`
  flex: 1;
  display: flex;
  padding-top: 6px;
  border-top: 1px solid #fff;
`;
const StatusCell = styled.div<{ $w: number; $green?: boolean }>`
  width: ${(p) => p.$w}px;
  flex: none;
  margin-right: 2px;
  border-top: 2px solid #888;
  border-left: 2px solid #aaa;
  background: ${(p) => (p.$green ? "#00f000" : "#f0f0f0")};
  display: flex;
  align-items: center;
  justify-content: center;
  font-family: "Open Sans", ${SANS};
  font-size: 15.5px;
  color: #222;
`;
const Grip = styled.span`
  margin-left: auto;
  align-self: flex-end;
  width: 18px;
  height: 16px;
  background: radial-gradient(circle, #bbb 1.5px, transparent 2px) 0 0 / 5px 5px;
`;

// sigwave body
const WaveBody = styled.div`
  height: 1310px;
  flex: none;
  margin-top: 4px;
  display: flex;
`;
const SideBar = styled.div`
  width: 50px;
  flex: none;
  margin-right: 5px;
  background: linear-gradient(to right, #e4eefc, #b8d0f6 50%, #8db0ea);
  border-radius: 4px 4px 0 0;
  padding-top: 1px;
  display: flex;
  flex-direction: column;
  align-items: center;
`;
const SideDots = styled.span`
  width: 32px;
  height: 3px;
  flex: none;
  margin: 1px 0 7px;
  background: repeating-linear-gradient(to right, #111 0 3px, transparent 3px 6px);
`;
const Stamp = styled.span<{ $on?: boolean }>`
  width: 40px;
  height: 40.5px;
  flex: none;
  display: flex;
  align-items: center;
  justify-content: center;
  background: ${(p) => (p.$on ? "#f0f0f0" : "transparent")};
`;
const StampFace = styled.span<{ $off?: boolean }>`
  width: 30px;
  height: 30px;
  background: #eeeeee;
  padding: 3px;
  display: grid;
  grid-template-columns: repeat(3, 1fr);
  gap: 2px;
  opacity: ${(p) => (p.$off ? 0.75 : 1)};
`;
const StampDot = styled.i<{ $c: string }>`
  background: ${(p) => p.$c};
`;
const TreePane = styled.div`
  width: 194px;
  flex: none;
  background: #fff;
  border-top: 2px solid #999;
  border-left: 2px solid #888;
  display: flex;
  flex-direction: column;
  overflow: hidden;
`;
const TreeList = styled.div`
  flex: 1;
`;
const TreeRow = styled.div<{ $lvl: number }>`
  height: 27px;
  display: flex;
  align-items: center;
  position: relative;
  padding-left: ${(p) => 8 + p.$lvl * 28.8}px;
  white-space: nowrap;
`;
const Guide = styled.i<{ $x: number; $half?: boolean }>`
  position: absolute;
  left: ${(p) => p.$x}px;
  top: 0;
  height: ${(p) => (p.$half ? 13 : 27)}px;
  border-left: 1px dotted #999;
`;
const Expander = styled.span`
  width: 15px;
  height: 15px;
  flex: none;
  display: flex;
  align-items: center;
  justify-content: center;
  background: linear-gradient(#fff, #d8d8e0);
  border: 1px solid #a0a0a0;
  border-radius: 2px;
  font: 700 13px/1 ${SANS};
  color: #3a5a9a;
  position: relative;
  z-index: 1;
  &::after {
    content: "";
    position: absolute;
    left: 14px;
    top: 6px;
    width: 8px;
    border-top: 1px dotted #999;
  }
`;
const TreeIcon = styled.span`
  margin-left: 7px;
  width: 24px;
  height: 24px;
  flex: none;
  position: relative;
  z-index: 1;
`;
const TreeLabel = styled.span<{ $sel?: boolean }>`
  margin-left: 7px;
  padding: 0 1px;
  font-family: ${UI};
  font-size: 17.5px;
  line-height: 26px;
  flex: 1;
  color: ${(p) => (p.$sel ? "#fff" : "#333")};
  background: ${(p) => (p.$sel ? "#0a78d0" : "transparent")};
  outline: ${(p) => (p.$sel ? "1px dotted #d08030" : "none")};
  outline-offset: -1px;
  overflow: hidden;
`;
const TreeScroll = styled.div`
  height: 23px;
  flex: none;
  margin-bottom: 3px;
  display: flex;
  align-items: center;
  background: #f0f0f0;
  color: #555;
`;
const Splitter = styled.div`
  width: 8px;
  flex: none;
  background: #eeeeee;
  border-top: 2px solid #ddd;
  border-right: 2px solid #999;
`;
const PlotPane = styled.div`
  flex: 1;
  min-width: 0;
  background: #fff;
  border-top: 2px solid #999;
  border-bottom: 4px solid #888;
  display: flex;
  flex-direction: column;
`;
const PlotTitle = styled.div`
  height: 41px;
  flex: none;
  font-family: ${SERIF};
  font-size: 35.5px;
  line-height: 38px;
  color: #000;
  white-space: nowrap;
  overflow: hidden;
`;
const ChartSvg = styled.svg`
  display: block;
  flex: none;
  width: 1023px;
  height: 1096px;
`;
const Legend = styled.div`
  margin: 1px 0 0 37px;
  width: 949px;
  height: 130px;
  flex: none;
  border: 2px solid #333;
  padding: 34px 0 0 213px;
  display: flex;
  flex-direction: column;
  gap: 9px;
`;
const LegendRow = styled.div`
  height: 21px;
  display: flex;
  align-items: center;
`;
const LegendLine = styled.span<{ $c: string }>`
  width: 210px;
  height: 2px;
  flex: none;
  background: ${(p) => p.$c};
`;
const LegendText = styled.span`
  margin-left: 72px;
  font-family: ${SERIF};
  font-size: 20px;
  color: #111;
  white-space: nowrap;
`;
const WaveStatus = styled.div`
  flex: 1;
  display: flex;
  align-items: center;
  padding-top: 2px;
  font-family: ${UI};
  font-size: 16.5px;
  color: #333;
`;
const WaveCell = styled.span<{ $w: number; $pad?: number; $rule?: boolean }>`
  width: ${(p) => p.$w}px;
  height: 100%;
  flex: none;
  padding-left: ${(p) => p.$pad ?? 0}px;
  display: flex;
  align-items: center;
  border-right: ${(p) => (p.$rule === false ? "none" : "1px solid #bcd0f6")};
`;

// taskbar
const Taskbar = styled.div`
  height: 60px;
  flex: none;
  display: flex;
  background: linear-gradient(to right, #1f1f20, #2a1f1c 30%, #2b1e1a 70%, #2a2020);
  color: #fff;
`;
const StartCell = styled.div`
  width: 73px;
  flex: none;
  display: flex;
  align-items: center;
  justify-content: center;
`;
const SearchBox = styled.div`
  width: 431px;
  flex: none;
  margin-top: 1px;
  background: #f3f3f3;
  border-left: 2px solid #ddd;
  display: flex;
  align-items: center;
  padding-left: 17px;
  position: relative;
  overflow: hidden;
`;
const SearchText = styled.span`
  margin-left: 12px;
  font-family: "Noto Sans CJK KR", sans-serif;
  font-size: 24px;
  color: #222;
`;
const SearchArt = styled.span`
  margin-left: auto;
  display: flex;
  align-self: flex-end;
`;
const TaskCell = styled.div<{ $w?: number; $run?: boolean; $on?: boolean }>`
  width: ${(p) => p.$w ?? 75}px;
  flex: none;
  display: flex;
  align-items: center;
  justify-content: center;
  position: relative;
  background: ${(p) => (p.$on ? "#544a47" : "transparent")};
  &::after {
    content: "";
    display: ${(p) => (p.$run ? "block" : "none")};
    position: absolute;
    left: ${(p) => (p.$on ? 0 : 8)}px;
    right: ${(p) => (p.$on ? 0 : 7)}px;
    bottom: 0;
    height: 3px;
    background: #76b9ed;
  }
`;
const Tray = styled.div`
  margin-left: 334px;
  display: flex;
  align-items: center;
  position: relative;
  flex: 1;
  &::after {
    content: "";
    position: absolute;
    right: 6px;
    top: 4px;
    bottom: 0;
    width: 1px;
    background: #888;
  }
`;
const TrayItem = styled.span<{ $w: number }>`
  width: ${(p) => p.$w}px;
  flex: none;
  display: flex;
  justify-content: center;
`;
const TrayA = styled.span`
  width: 33px;
  flex: none;
  text-align: center;
  font-family: ${SANS};
  font-size: 30px;
  line-height: 1;
  transform: scaleX(0.75);
`;
const Clock = styled.div`
  width: 120px;
  flex: none;
  font-family: "Noto Sans CJK KR", sans-serif;
  font-size: 20.5px;
  line-height: 29px;
  text-align: center;
  white-space: nowrap;
  transform: scaleX(0.88);
`;
const Notice = styled.div`
  margin-left: 15px;
  width: 30px;
  height: 42px;
  position: relative;
`;
const NoticeBadge = styled.span`
  position: absolute;
  left: 14px;
  top: 20px;
  width: 24px;
  height: 24px;
  border-radius: 50%;
  background: #2a1f1c;
  border: 1px solid #bbb;
  font: 16px/22px ${SANS};
  text-align: center;
`;

// ---------- data ----------
type Item = string | { i: string; w?: number; on?: boolean };
const leftRows: { indent?: number; h: number; groups: { w: number; pad: number; pitch: number; items: Item[] }[] }[] = [
  {
    h: 51,
    groups: [
      { w: 346, pad: 8, pitch: 46, items: [{ i: "noteWave", w: 52 }, "docChip", { i: "sine", on: true }, "book", "stack", "spools", "help"] },
      { w: 252, pad: 8, pitch: 47, items: ["zArea", "zBox", "zIn", "zOut", "zBack"] },
      { w: 484, pad: 7, pitch: 46.8, items: ["undo", "notes", "erase", "addChip", "copyDoc", "move", "del", "mirror", "rotL", "rotR"] },
      { w: 159, pad: 9, pitch: 47, items: ["newL", "openL", "saveL"] },
    ],
  },
  {
    h: 53,
    indent: 128,
    groups: [
      { w: 297, pad: 9, pitch: 46.4, items: ["wireChip", "chipB", "chipBt", "chipG", "chipGt", "chipG0"] },
      { w: 346, pad: 10, pitch: 47.3, items: ["res", "res2", "cap", "gnd", "xfmr", "diode", "flag"] },
    ],
  },
  {
    h: 52,
    groups: [
      { w: 134, pad: 7, pitch: 46, items: ["parDiag", "serChip", { i: "down", w: 22 }] },
      { w: 341, pad: 9, pitch: 46, items: ["chipB", "chipBb", { i: "down", w: 22 }, "chipBt", { i: "down", w: 22 }, "chipG", "chipGt", "chipG0"] },
      { w: 155, pad: 9, pitch: 46, items: ["tri1", { i: "down", w: 22 }, { i: "tri2", w: 44 }, { i: "down", w: 28 }] },
    ],
  },
];
const waveRow1: { w: number; items: string[]; sel?: string }[] = [
  { w: 145, items: ["newDoc", "openDoc", "refresh"] },
  { w: 102, items: ["copyGray", "pasteGray"] },
  { w: 345, items: ["m1", "m2", "m3", "m4", "m5", "m6", "m7", "m8"] },
  { w: 305, items: ["cLow", "cLeft", "cH", "cV", "cDiag", "cDiagT", "tText"] },
  { w: 225, items: ["gWave", "gBus", "gSpec", "gEye", "gPolar"], sel: "gEye" },
  { w: 102, items: ["print", "qHelp"] },
  { w: 40, items: ["r"], sel: "r" },
];
const waveRow2: { w: number; items: string[]; on?: string[]; font?: boolean }[] = [
  { w: 266, items: ["dash1", "dash2", "dash3", "dash4", "dash5", "dW"], on: ["dW"] },
  { w: 467, items: ["w1", "w2", "w3", "w4", "w5", "w6", "w7", "w8", "w9", "dD"], on: ["dD"] },
  { w: 387, items: ["sLine", "sCircle", "sSquare", "sDia", "sTri", "sX", "sPlus", "sBar", "sMinus"], on: ["sLine"] },
  { w: 150, items: [], font: true },
];

const treeIcons: Record<string, React.ReactNode> = {
  floppy: (
    <>
      <rect x="2" y="1" width="28" height="30" fill="#111" />
      <rect x="8" y="2" width="16" height="12" fill="#c8c8c8" />
      <rect x="6" y="18" width="20" height="13" fill="#8a8a10" />
      <rect x="18" y="22" width="5" height="7" fill="#111" />
    </>
  ),
  views: (
    <>
      <path d="M2 28V8l3-4h7l2 3h14v21z" fill="#d8cc60" stroke="#777" />
      <rect x="7" y="11" width="21" height="17" fill="#f0e890" stroke="#111" strokeWidth="1.5" />
      <path d="M10 16l4 3 4-3 4 3 4-3M10 24l4-3 4 3 4-3 4 3" fill="none" stroke="#111" strokeWidth="2" />
    </>
  ),
  cart: (
    <>
      <circle cx="16" cy="16" r="13" fill="#f4e020" stroke="#e01010" strokeWidth="4" />
      <path d="M16 3v26M3 16h26M8 8l16 16M24 8L8 24" stroke="#111" strokeWidth="2" />
      <path d="M5 24L27 8" stroke="#e01010" strokeWidth="4" />
    </>
  ),
  eye: (
    <>
      <rect x="2" y="2" width="28" height="28" fill="#f8f020" stroke="#111" strokeWidth="2" />
      <path d="M2 16h8M22 16h8M16 2v8M16 22v8M7 7l4 4M25 7l-4 4M7 25l4-4M25 25l-4-4" stroke="#111" strokeWidth="3" />
    </>
  ),
  wave: (
    <>
      <path d="M2 28V8l3-4h7l2 3h14v21z" fill="#d8cc60" stroke="#777" />
      <rect x="7" y="11" width="21" height="17" fill="#e8f0f8" stroke="#111" strokeWidth="1.5" />
      <path d="M9 25l3-11h3l2 6 2-6h3l3 11" fill="none" stroke="#2020a0" strokeWidth="2" />
    </>
  ),
  sim: (
    <>
      <path d="M2 28V10l4-4h22v22z" fill="#e8d870" stroke="#111" />
      <circle cx="21" cy="6" r="5" fill="#10b020" stroke="#111" />
      <path d="M6 25l14-14" stroke="#e02020" strokeWidth="3" strokeDasharray="3 2" />
      <circle cx="16" cy="15" r="4" fill="#106020" />
    </>
  ),
  red: <path d="M1 29h6c3 0 3-24 5-24s2 5 5 5 2-5 5-5 3 8 4 24" fill="none" stroke="#f02020" strokeWidth="2" />,
  blue: <path d="M1 29h6c3 0 3-24 5-24s2 5 5 5 2-5 5-5 3 8 4 24" fill="none" stroke="#1020e0" strokeWidth="2" />,
};
const treeRows = [
  { label: "SigWave", lvl: 0, open: true, icon: "floppy", guides: [] as { x: number; half?: boolean }[] },
  { label: "Views", lvl: 1, open: true, icon: "views", guides: [{ x: 45 }] },
  { label: "Cartesian", lvl: 2, icon: "cart", guides: [{ x: 45 }, { x: 74 }] },
  { label: "Eye Diagram", lvl: 2, icon: "eye", guides: [{ x: 45 }, { x: 74, half: true }] },
  { label: "Waveform Library", lvl: 1, open: true, icon: "wave", guides: [{ x: 45, half: true }] },
  { label: "sim1: (PMOD2BNC", lvl: 2, open: true, icon: "wave", guides: [{ x: 74, half: true }] },
  { label: "Simulation", lvl: 3, icon: "sim", guides: [{ x: 103 }] },
  { label: "PMOD2BNC", lvl: 3, icon: "red", guides: [{ x: 103 }] },
  { label: "PMOD2BNC", lvl: 3, icon: "blue", sel: true, guides: [{ x: 103, half: true }] },
];

const blockTop = (d: string) => <path d={d} fill="#2f5039" stroke="#6db089" strokeWidth="1.4" />;

// ---------- parts ----------
const Schematic = () => {
  const nodes = [238, 325.5, 455, 498, 671, 746, 918, 1005];
  const label = { fill: "#ddd", fontFamily: SANS, textAnchor: "middle" as const };
  const pink = "#cc88cc";
  const driver = (x: number, name: string, kind: string, kx: number, nx: number, ux: number) => (
    <>
      <text {...label} x={nx} y="618" fontSize="19">{name}</text>
      <text {...label} x={kx} y="639" fontSize="14.5">{kind}</text>
      <text x={ux} y="661" fontSize="14" fill={pink} fontFamily={SANS} textAnchor="middle">Unknown</text>
      <rect x={x} y="672" width="97.5" height="119" fill="none" stroke="#f00" strokeWidth="1.6" />
      <path d={`M${x + 39} 677L${x + 81} 710 L${x + 39} 742z`} fill="#660000" stroke="#f00" strokeWidth="1.3" />
      <path d={`M${x + 81} 721L${x + 39} 753 L${x + 81} 784z`} fill="#660000" stroke="#f00" strokeWidth="1.3" />
      <path d={`M${x + 16} 834V710H${x + 39}M${x + 16} 753H${x + 39}`} fill="none" stroke="#f00" strokeWidth="1.4" />
    </>
  );
  return (
    <FullSvg viewBox="1 241 1278 1072">
      {driver(222, "J1", "CUSTOM", 273, 274, 268)}
      {driver(989, "U1", "TRISTATE", 1035, 1044, 1033)}
      <path d="M336 834H362M424 834H445M480 834H520M640 834H660M756 834H780M885 834H905" stroke="#8c6a1e" strokeWidth="3" />
      <path d="M498 832H530M640 832H671M746 832H775M885 832H918" stroke="#6a5a18" strokeWidth="4" />

      {/* TL1 */}
      <text {...label} x="386" y="769" fontSize="20">TL1</text>
      <text {...label} x="376" y="791" fontSize="10">Microstrip</text>
      <text {...label} x="385" y="812" fontSize="14">50 ohm</text>
      <text {...label} x="380" y="872" fontSize="14">4.8 ns</text>
      <text x="250" y="819" fontSize="14.5" fill="#ddd" fontFamily={SANS}>CUSDefaultInst</text>
      <path d="M364 817H418C425 825 425 841 418 849H364C358 841 358 825 364 817z" fill="#6b5518" stroke="#daa520" strokeWidth="1.6" />
      <ellipse cx="364" cy="833" rx="7" ry="16" fill="#000" stroke="#daa520" strokeWidth="1.6" />

      {/* TL_6 */}
      <text {...label} x="581" y="791" fontSize="21">TL_6</text>
      {blockTop("M517 795H641L651 805H528z")}
      {blockTop("M528 805H651V830H548L528 822z")}
      {blockTop("M517 795L528 805V830H517z")}
      {blockTop("M528 836H548V843H651V864H528z")}
      {blockTop("M517 836H528V864L517 853z")}
      <path d="M535 825H631L643 838H544z" fill="#7a5c1c" stroke="#e0a020" strokeWidth="1.4" />
      <path d="M544 838H643V842H544z" fill="#e8c040" />
      <text x="590" y="838" fontSize="9" fill="#e07878" fontFamily={SANS} textAnchor="middle">W.W.W</text>
      <text {...label} x="574" y="895" fontSize="14">2.2684 IN</text>
      <text {...label} x="576" y="918" fontSize="14">49.702 ohm</text>
      <text {...label} x="592" y="939" fontSize="14">TOP</text>

      {/* TL_5 */}
      <text {...label} x="829" y="791" fontSize="21">TL_5</text>
      {blockTop("M775 795H899L889 805H765z")}
      {blockTop("M765 805H889V830H785L765 822z")}
      {blockTop("M889 805L899 795V830H889z")}
      {blockTop("M765 836H775L777 843H880L889 836V864H765z")}
      {blockTop("M889 836H899V853L889 864z")}
      <path d="M786 825H884L877 838H775z" fill="#7a5c1c" stroke="#e0a020" strokeWidth="1.4" />
      <path d="M775 838H877V842H775z" fill="#e8c040" />
      <text x="838" y="838" fontSize="9" fill="#e07878" fontFamily={SANS} textAnchor="middle">W.W.W</text>
      <text {...label} x="822" y="895" fontSize="14">0.0805 IN</text>
      <text {...label} x="824" y="918" fontSize="14">49.702 ohm</text>
      <text {...label} x="842" y="939" fontSize="14">TOP</text>

      <text x="1018" y="819" fontSize="14.5" fill="#ddd" fontFamily={SANS}>SPARTAN7_LVCMOS...</text>
      <text x="218" y="820" fontSize="11" fill={pink} fontFamily={SANS}>11</text>
      <text x="990" y="820" fontSize="11" fill={pink} fontFamily={SANS}>1</text>

      <path d="M238 834H340M424 834H1005" stroke="#b8b000" strokeWidth="2" />
      {nodes.map((x) => (
        <ellipse key={x} cx={x} cy="834" rx="9.6" ry="10.4" fill="#ff0" />
      ))}
    </FullSvg>
  );
};

const Chart = () => {
  const num = { fontFamily: SERIF, fontSize: 20, fill: "#222" };
  return (
    <ChartSvg viewBox="1537 240 1023 1096">
      <defs>
        <clipPath id="plotClip">
          <rect x="1662" y="278" width="824" height="926" />
        </clipPath>
      </defs>
      <text {...num} x="2074" y="266" textAnchor="middle">case0 - Sun Nov 19 19:22:05 2023</text>
      <path d={tickPaths()} stroke="#111" strokeWidth="1.6" fill="none" />
      <rect x="1662" y="278" width="824" height="926" fill="none" stroke="#222" strokeWidth="2" />
      {[5, 4, 3, 2, 1, 0, -1].map((v) => (
        <text key={v} {...num} x="1645" y={PY(v) + 7} textAnchor="end">{v}</text>
      ))}
      {[0, 10, 20, 30].map((t) => (
        <text key={t} {...num} x={PX(t)} y="1241" textAnchor="middle">{t}</text>
      ))}
      <text {...num} transform="translate(1553 745) rotate(-90)" textAnchor="middle">Voltage [V]</text>
      <text {...num} x="2074" y="1298" textAnchor="middle">Time [ns]</text>
      <g clipPath="url(#plotClip)" fill="none" strokeLinejoin="bevel">
        {redTraces.map((t, i) => (
          <path key={i} d={tracePath(t)} stroke="#ff0000" strokeWidth={t.w} />
        ))}
        {blueTraces.map((t, i) => (
          <path key={i} d={tracePath(t)} stroke="#0000ff" strokeWidth={t.w} />
        ))}
      </g>
      <path d="M1662 741H2486" stroke="#2020ff" strokeWidth="1.8" strokeDasharray="5 4" />
      <path d="M1662 818H2486" stroke="#f03030" strokeWidth="1.6" strokeDasharray="4 3" />
      <path d="M1662 926H2486" stroke="#2020ff" strokeWidth="1.8" strokeDasharray="5 4" />
      <text {...num} x="2344" y="787" textAnchor="end" fill="#3030e8">2.000 V</text>
      <text {...num} x="2344" y="866" textAnchor="end" fill="#e82020">1.500 V</text>
      <text {...num} x="2345" y="973" textAnchor="end" fill="#3030e8">800.000 mV</text>
    </ChartSvg>
  );
};

const Tool = ({ item, pitch }: { item: Item; pitch: number }) => {
  const o = typeof item === "string" ? { i: item } : item;
  return (
    <Cell $w={o.w ?? pitch} $on={o.on}>
      <Icon name={o.i} />
    </Cell>
  );
};

const Menu = ({ items, gap }: { items: string[]; gap: number }) => (
  <>
    {items.map((m) => (
      <MenuItem key={m} $gap={gap}>
        <Key>{m[0]}</Key>
        {m.slice(1)}
      </MenuItem>
    ))}
  </>
);

const Icon24 = ({ name }: { name: string }) => (
  <Svg $s={24} viewBox="0 0 32 32">
    {treeIcons[name]}
  </Svg>
);

const Stamps = () => (
  <>
    {Array.from({ length: 22 }, (_, i) => (
      <Stamp key={i} $on={i === 1}>
        <StampFace $off={i >= 20}>
          {Array.from({ length: 9 }, (_, c) => (
            <StampDot key={c} $c={c !== 4 ? "#b0b0b0" : i === 1 || i === 21 ? "#eeeeee" : i === 20 ? "#dcdc80" : "#ffff00"} />
          ))}
        </StampFace>
      </Stamp>
    ))}
  </>
);

const Win = ({ size = 36 }: { size?: number }) => (
  <svg width={size} height={size} viewBox="0 0 32 32">
    <path d="M2 6l11-2v11H2zM15 3.6L30 1v14H15zM2 17h11v11L2 26zM15 17h15v14l-15-2.500z" fill="#fff" />
  </svg>
);

const task: { key: string; run?: boolean; on?: boolean; node: React.ReactNode }[] = [
  {
    key: "files", run: true,
    node: (
      <svg width="38" height="36" viewBox="0 0 38 36">
        <path d="M3 4h12l4 4H3z" fill="#e8a820" />
        <rect x="3" y="7" width="32" height="26" fill="#f8d458" />
        <path d="M9 33V20h20v13h-6v-7h-8v7z" fill="#2a8cd8" />
      </svg>
    ),
  },
  {
    key: "eagle",
    node: (
      <svg width="30" height="44" viewBox="0 0 30 44">
        <path d="M4 2h24l-4 8H13v8h10v7H13v9h13l2 8H4z" fill="#d88a30" />
        <path d="M4 2l9 8v24l-9 8z" fill="#a85a18" />
      </svg>
    ),
  },
  {
    key: "chrome",
    node: (
      <svg width="38" height="44" viewBox="0 0 44 44">
        <path d="M22 2a20 20 0 0 1 18 11H22a9 9 0 0 0-8 4L5 9a20 20 0 0 1 17-7z" fill="#db4437" />
        <path d="M40 13a20 20 0 0 1-17 29l9-15a9 9 0 0 0-1-14z" fill="#fbc02d" />
        <path d="M23 42A20 20 0 0 1 5 9l9 16a9 9 0 0 0 11 5z" fill="#34a853" />
        <circle cx="22" cy="22" r="9" fill="#fff" />
        <circle cx="22" cy="22" r="7" fill="#4285f4" />
      </svg>
    ),
  },
  {
    key: "arch",
    node: (
      <svg width="28" height="42" viewBox="0 0 28 42">
        <path d="M4 8L16 2l8 8v24l-10 6-6-5 11-4V13l-5-4-8 4z" fill="#b8a468" />
        <path d="M9 20l8-4v10l-6 3v-5z" fill="#b8a468" />
      </svg>
    ),
  },
  {
    key: "vivado",
    node: (
      <svg width="36" height="44" viewBox="0 0 36 44">
        <path d="M9 2l13 12-7 13z" fill="#cfcf58" />
        <path d="M1 44l2-20 10 6z" fill="#a4a420" />
        <path d="M18 24l9-6 9 8-9 7z" fill="#dcdc70" />
      </svg>
    ),
  },
  {
    key: "matlab",
    node: (
      <svg width="38" height="42" viewBox="0 0 38 42">
        <path d="M1 20l10-5 5 6-8 5z" fill="#3a78c8" />
        <path d="M14 18L24 1l12 30-6-5-6 14z" fill="#e8842a" />
        <path d="M24 1c-4 8-8 18-14 20l7 5c3-8 5-17 7-25z" fill="#c8421a" />
      </svg>
    ),
  },
  {
    key: "r",
    node: (
      <svg width="36" height="44" viewBox="0 0 36 44">
        <ellipse cx="18" cy="22" rx="18" ry="22" fill="#7da8d8" />
        <text x="18" y="30" textAnchor="middle" fontFamily={SERIF} fontSize="22" fill="#fff">R</text>
      </svg>
    ),
  },
  {
    key: "remote",
    node: (
      <svg width="36" height="44" viewBox="0 0 36 44">
        <path d="M3 3l24 3v26L3 28z" fill="#e8e8e8" stroke="#888" />
        <path d="M6 6l18 2v20L6 25z" fill="#2a3fc8" />
        <path d="M10 34h16v5H10z" fill="#ccc" />
        <circle cx="26" cy="34" r="9" fill="#eee" stroke="#999" />
        <path d="M22 36l3-3M30 32l-3 3" stroke="#2a9a3a" strokeWidth="2" />
      </svg>
    ),
  },
  {
    key: "cloud",
    node: (
      <svg width="36" height="44" viewBox="0 0 36 44">
        <rect width="36" height="44" rx="8" fill="#1c8cf0" />
        <path d="M6 32c-6-1-5-10 2-10 1-8 13-10 16-2 7-1 10 11 4 12z" fill="#fff" />
        <path d="M11 14l6 4 7-5-4 8 3 7-5-4-6 3 2-7z" fill="#e02828" />
      </svg>
    ),
  },
  {
    key: "hwp",
    node: (
      <svg width="34" height="40" viewBox="0 0 34 40">
        <text x="17" y="36" textAnchor="middle" fontFamily={SANS} fontWeight="700" fontSize="44" fill="#f2aa10">H</text>
      </svg>
    ),
  },
  {
    key: "ppt",
    node: (
      <svg width="36" height="44" viewBox="0 0 36 44">
        <ellipse cx="20" cy="22" rx="16" ry="22" fill="#e8734a" />
        <path d="M20 0a16 22 0 0 1 16 22H20z" fill="#f2a07c" />
        <rect x="1" y="12" width="18" height="20" rx="2" fill="#c43e1c" />
        <text x="10" y="28" textAnchor="middle" fontFamily={SANS} fontWeight="700" fontSize="17" fill="#fff">P</text>
      </svg>
    ),
  },
  {
    key: "dia",
    node: (
      <svg width="38" height="46" viewBox="0 0 38 46">
        <path d="M19 23L11 11 19 0l8 11z" fill="#e88a80" />
        <path d="M19 23L8 12 0 25l10 8z" fill="#6aa8f0" />
        <path d="M19 23l11-11 8 13-10 8z" fill="#70c070" />
        <path d="M19 23l-9 10 9 13 9-13z" fill="#f2d868" />
        <circle cx="19" cy="27" r="3" fill="#222" />
      </svg>
    ),
  },
  {
    key: "vivado2",
    node: (
      <svg width="36" height="44" viewBox="0 0 36 44">
        <path d="M9 2l13 12-7 13z" fill="#cfcf58" />
        <path d="M1 44l2-20 10 6z" fill="#a4a420" />
        <path d="M18 24l9-6 9 8-9 7z" fill="#dcdc70" />
      </svg>
    ),
  },
  {
    key: "diag", run: true,
    node: (
      <svg width="38" height="44" viewBox="0 0 38 44">
        <rect x="1" y="1" width="36" height="42" rx="3" fill="#16283c" stroke="#e0202c" strokeWidth="2" />
        <circle cx="10" cy="12" r="5" fill="none" stroke="#fff" strokeWidth="2.6" />
        <circle cx="27" cy="12" r="5" fill="none" stroke="#fff" strokeWidth="2.6" />
        <circle cx="10" cy="32" r="5" fill="none" stroke="#fff" strokeWidth="2.6" />
        <circle cx="27" cy="32" r="5" fill="none" stroke="#fff" strokeWidth="2.6" />
        <path d="M12 30l14-16" stroke="#e0202c" strokeWidth="4" />
      </svg>
    ),
  },
  {
    key: "chrome2", run: true,
    node: (
      <svg width="42" height="48" viewBox="0 0 42 48">
        <path d="M20 2a18 20 0 0 1 16 11H20a8 8 0 0 0-7 4L4 9a18 20 0 0 1 16-7z" fill="#db4437" />
        <path d="M36 13c3 8 2 20-8 27l-2-15a8 8 0 0 0-1-12z" fill="#fbc02d" />
        <path d="M21 42A18 20 0 0 1 4 9l9 14a8 8 0 0 0 9 5z" fill="#34a853" />
        <circle cx="20" cy="21" r="8" fill="#fff" />
        <circle cx="20" cy="21" r="6" fill="#4285f4" />
        <ellipse cx="29" cy="33" rx="11" ry="14" fill="#8a5cc0" />
        <text x="29" y="37" textAnchor="middle" fontFamily="Noto Sans CJK KR" fontSize="10" fill="#e8d8f8">절망</text>
      </svg>
    ),
  },
  {
    key: "sigx", run: true,
    node: (
      <svg width="38" height="48" viewBox="0 0 38 48">
        <path d="M2 2h30l4 4v36H2z" fill="#0a8a1a" stroke="#111" />
        <text x="4" y="17" fontFamily={SANS} fontSize="12" fill="#dff" textLength="16">Sig</text>
        <text x="3" y="34" fontFamily={SANS} fontSize="11" fill="#dff" textLength="32">Xplorer</text>
        <path d="M5 42h28v5H5z" fill="#111" />
        <path d="M7 43h24v3H7z" fill="#f0e020" />
      </svg>
    ),
  },
  {
    key: "sigw", run: true, on: true,
    node: (
      <svg width="40" height="46" viewBox="0 0 40 46">
        <path d="M5 3v36M1 8l4-6 4 6zM1 34l4 6 4-6zM5 20h24M24 16l6 4-6 4z" fill="#0000e0" stroke="#0000e0" strokeWidth="1.5" />
        <path d="M8 18c2-16 4-14 6-6s3-10 6-6 3 6 4 10 3 24 7 24" fill="none" stroke="#111" strokeWidth="1.5" />
      </svg>
    ),
  },
];

export default function App() {
  return (
    <>
      <GlobalStyle />
      <Desktop>
        <Windows>
          <LeftWin>
            <TitleBar>
              <svg width="28" height="28" viewBox="0 0 28 28">
                <path d="M2 1h22l3 3v22H3z" fill="#0c7a1c" stroke="#111" />
                <path d="M7 6l4 3M12 5l3 5M6 13h16M8 17h3M13 17h3M18 17h3" stroke="#e8fff0" strokeWidth="2" />
                <rect x="5" y="24" width="18" height="3" fill="#e8d820" />
              </svg>
              <TitleText $dim>SigXplorer OrCAD PCB Designer Professional: N17882.top 1.0  Project: C:.../PMOD2BNC_SIMPLE_v1_0/N17882_SigX</TitleText>
              <Caption $dim>
                <svg width="15" height="2"><path d="M0 1h15" stroke="#888" strokeWidth="1.5" /></svg>
                <svg width="15" height="15"><rect x=".5" y=".5" width="14" height="14" fill="none" stroke="#999" /></svg>
                <svg width="15" height="15"><path d="M0 0l15 15M15 0L0 15" stroke="#999" /></svg>
              </Caption>
            </TitleBar>
            <MenuBar $h={30} $bg="#f0f0f0" $pad={11}>
              <Menu items={["File", "Edit", "View", "Set", "Analyze", "Help"]} gap={22} />
              <Logo $right={9} $top={0}>cadence</Logo>
            </MenuBar>
            <RedLine $h={4} />
            {leftRows.map((row, r) => (
              <ToolRow key={r} $h={row.h} $indent={row.indent}>
                {row.groups.map((g, i) => (
                  <GrayGroup key={i} $w={g.w} $pad={g.pad}>
                    {g.items.map((it, k) => (
                      <Tool key={k} item={it} pitch={g.pitch} />
                    ))}
                  </GrayGroup>
                ))}
              </ToolRow>
            ))}
            <Canvas>
              <Schematic />
            </Canvas>
            <Dock>
              <ResultsPane>
                <SideTab>
                  <X size={15} strokeWidth={3.4} />
                  <svg width="8" height="10"><path d="M7 0v10L0 5z" fill="#222" /></svg>
                  <Pin size={15} strokeWidth={2.4} />
                  <SideLabel>Results</SideLabel>
                </SideTab>
                <ResultsBody>
                  <GridRow $h={44}>
                    <Head>SimID</Head>
                    <Head>Driver</Head>
                    <Head>Receiver</Head>
                    <Head>Cycle</Head>
                  </GridRow>
                  <GridRow $h={25}>
                    <Data>1</Data>
                    <Data>PMOD2BNCSIMPLE_V1_04.J1.11</Data>
                    <Data>PMOD2BNCSIMPLE_V1_04.U1.1</Data>
                    <Data>1</Data>
                  </GridRow>
                  <HScroll>
                    <ChevronLeft size={20} strokeWidth={3} />
                    <ScrollThumb $w={170} $h={23} />
                    <ScrollGap />
                    <ChevronRight size={20} strokeWidth={3} />
                  </HScroll>
                </ResultsBody>
              </ResultsPane>
              <CommandPane>
                <SideTab>
                  <X size={15} strokeWidth={3.4} />
                  <svg width="8" height="10"><path d="M7 0v10L0 5z" fill="#222" /></svg>
                  <Pin size={15} strokeWidth={2.4} />
                  <SideLabel>Command</SideLabel>
                </SideTab>
                <CommandBody>
                  <LogArea>
                    <LogText>
                      Using waveform resolution 0.200000 ns.
                      <br />
                      Simulation (PMOD2BNCSIMPLE_V1_04 J1 11) PMOD2BNCSIMPLE_V1_04 J1
                      <br />
                      11 Pulse Typ Reflection finished
                    </LogText>
                    <VScroll>
                      <ChevronUp size={20} strokeWidth={3} />
                      <VThumb />
                      <ChevronDown size={20} strokeWidth={3} />
                    </VScroll>
                  </LogArea>
                  <CommandBox>Command &gt;</CommandBox>
                </CommandBody>
              </CommandPane>
            </Dock>
            <TabRow>
              <TabButton>Measurements</TabButton>
            </TabRow>
            <StatusRow>
              <StatusCell $w={771} />
              <StatusCell $w={80} $green>Ready</StatusCell>
              <StatusCell $w={198} />
              <StatusCell $w={198}>5524.00, 4214.50</StatusCell>
              <Grip />
            </StatusRow>
          </LeftWin>

          <RightWin>
            <TitleBar>
              <svg width="24" height="22" viewBox="0 0 24 22">
                <path d="M1 20C4 20 4 4 7 2s3 6 5 6 2-7 5-6 3 18 6 18" fill="none" stroke="#22e040" strokeWidth="1.6" />
                <path d="M3 13h18M3 13l4-3v6zM21 13l-4-3v6z" fill="#e02020" stroke="#e02020" />
              </svg>
              <TitleText>Untitled - SigWave</TitleText>
              <Caption>
                <svg width="15" height="2"><path d="M0 1h15" stroke="#111" strokeWidth="1.5" /></svg>
                <svg width="15" height="15"><rect x=".5" y=".5" width="14" height="14" fill="none" stroke="#111" /></svg>
                <svg width="15" height="15"><path d="M0 0l15 15M15 0L0 15" stroke="#111" /></svg>
              </Caption>
            </TitleBar>
            <MenuBar $h={36} $bg={BLUE} $pad={15}>
              <Menu items={["File", "Edit", "Zoom", "Graph", "Tools", "View", "Help"]} gap={14} />
              <Logo $right={22} $top={0}>cadence</Logo>
            </MenuBar>
            <RedLine $h={6} />
            <ToolRow $h={50}>
              {waveRow1.map((g, i) => (
                <BlueGroup key={i} $w={g.w} $pad={13}>
                  {g.items.map((n) => (
                    <BlueCell key={n} $sel={g.sel === n}>
                      <Icon name={n} />
                    </BlueCell>
                  ))}
                </BlueGroup>
              ))}
            </ToolRow>
            <ToolRow $h={54} $top={2}>
              {waveRow2.map((g, i) => (
                <BlueGroup key={i} $w={g.w} $pad={13}>
                  {g.items.map((n) => (
                    <BlueCell key={n} $on={g.on?.includes(n)}>
                      <Icon name={n} />
                    </BlueCell>
                  ))}
                  {g.font && (
                    <FontField>
                      <Selected>
                        @HY<small>견고딕</small>
                      </Selected>
                    </FontField>
                  )}
                </BlueGroup>
              ))}
            </ToolRow>
            <WaveBody>
              <SideBar>
                <SideDots />
                <Stamps />
              </SideBar>
              <TreePane>
                <TreeList>
                  {treeRows.map((r, i) => (
                    <TreeRow key={i} $lvl={r.lvl}>
                      {r.guides.map((g, k) => (
                        <Guide key={k} $x={g.x} $half={g.half} />
                      ))}
                      <Expander>{r.open ? "−" : "+"}</Expander>
                      <TreeIcon>
                        <Icon24 name={r.icon} />
                      </TreeIcon>
                      <TreeLabel $sel={r.sel}>{r.label}</TreeLabel>
                    </TreeRow>
                  ))}
                </TreeList>
                <TreeScroll>
                  <ChevronLeft size={20} strokeWidth={3} />
                  <ScrollThumb $w={30} $h={22} />
                  <ScrollGap />
                  <ChevronRight size={20} strokeWidth={3} />
                </TreeScroll>
              </TreePane>
              <Splitter />
              <PlotPane>
                <PlotTitle>BNCSIMPLE_V1_04 J1 11) PMOD2BNCSIMPLE_V1_04 J1 11 Pulse</PlotTitle>
                <Chart />
                <Legend>
                  <LegendRow>
                    <LegendLine $c="#f01020" />
                    <LegendText>PMOD2BNCSIMPLE_V1_04 J1 11</LegendText>
                  </LegendRow>
                  <LegendRow>
                    <LegendLine $c="#1010f0" />
                    <LegendText>PMOD2BNCSIMPLE_V1_04 U1 1</LegendText>
                  </LegendRow>
                </Legend>
              </PlotPane>
            </WaveBody>
            <WaveStatus>
              <WaveCell $w={799} $pad={55} $rule={false}>Ready</WaveCell>
              <WaveCell $w={144}>X:</WaveCell>
              <WaveCell $w={151} $pad={7}>Y:</WaveCell>
              <WaveCell $w={46} />
              <WaveCell $w={55} />
              <WaveCell $w={53} />
            </WaveStatus>
          </RightWin>
        </Windows>
        <Taskbar>
          <StartCell>
            <Win />
          </StartCell>
          <SearchBox>
            <svg width="28" height="32" viewBox="0 0 28 32">
              <circle cx="17" cy="11" r="9" fill="none" stroke="#222" strokeWidth="2" />
              <path d="M11 18L2 29" stroke="#222" strokeWidth="2" />
            </svg>
            <SearchText>찾기</SearchText>
            <SearchArt>
              <svg width="120" height="58" viewBox="0 0 120 58">
                <path d="M0 58l14-14h92l14 14z" fill="#d8b48c" />
                <path d="M18 24l20-3 2 2 16-6 6 24-20 7-18 2z" fill="#f4f4f4" stroke="#5ca04c" strokeWidth="2" />
                <path d="M24 28l12-2M25 33l12-2M26 38l12-2M44 23l10-4M45 28l10-4M47 33l10-4" stroke="#999" />
                <path d="M46 30l14-22 5 4-15 21z" fill="#f09a2c" />
                <path d="M60 8l3-4 5 4-3 4z" fill="#e85a4a" />
                <path d="M72 18c0-12 28-12 28 0v26c0 6-28 6-28 0z" fill="#1a76e8" />
                <path d="M80 8c0-8 12-8 12 0" fill="none" stroke="#1a76e8" strokeWidth="3" />
                <path d="M76 36c0-12 20-12 20 0v8c-6 3-14 3-20 0z" fill="#48a8f8" />
                <path d="M76 44c6 3 14 3 20 0" stroke="#a060e0" strokeWidth="3" fill="none" />
              </svg>
            </SearchArt>
          </SearchBox>
          <TaskCell $w={76}>
            <svg width="26" height="26" viewBox="0 0 26 26" fill="none" stroke="#fff" strokeWidth="1.6">
              <path d="M1 1h16v4H1M4 8h13v10H4zM1 21h16v4H1M23 1v4M23 8v1M23 12v13" />
            </svg>
          </TaskCell>
          {task.map((t) => (
            <TaskCell key={t.key} $run={t.run} $on={t.on}>
              {t.node}
            </TaskCell>
          ))}
          <Tray>
            <TrayItem $w={36}>
              <svg width="20" height="14"><path d="M1 13L10 2l9 11" fill="none" stroke="#fff" strokeWidth="1.5" /></svg>
            </TrayItem>
            <TrayItem $w={36}>
              <svg width="26" height="30" viewBox="0 0 26 30" fill="none" stroke="#fff" strokeWidth="1.6">
                <rect x="6" y="9" width="18" height="19" fill="#fff" />
                <path d="M4 1v6M9 1v6M3 7h7v6H3z" />
              </svg>
            </TrayItem>
            <TrayItem $w={36}>
              <svg width="24" height="30" viewBox="0 0 24 30" fill="none" stroke="#fff" strokeWidth="1.6">
                <rect x="4" y="1" width="16" height="19" fill="#fff" stroke="#fff" />
                <rect x="7" y="3" width="10" height="10" fill="#222" />
                <path d="M12 20v6M3 28h18" strokeWidth="2.4" />
              </svg>
            </TrayItem>
            <TrayItem $w={34}>
              <svg width="24" height="34" viewBox="0 0 24 34" fill="none" stroke="#bbb" strokeWidth="1.4">
                <path d="M2 12h4l6-6v22l-6-6H2z" />
                <path d="M15 12c2 3 2 7 0 10M18 9c3 5 3 11 0 16M21 6c4 7 4 15 0 22" />
              </svg>
            </TrayItem>
            <TrayA>A</TrayA>
            <Clock>
              오후 7:22
              <br />
              2023-11-19
            </Clock>
            <Notice>
              <svg width="26" height="30" viewBox="0 0 26 30">
                <path d="M1 1h24v18H8l-7 6z" fill="#fff" />
                <path d="M5 6h16M5 10h16M5 14h10" stroke="#222" strokeWidth="1.6" />
              </svg>
              <NoticeBadge>1</NoticeBadge>
            </Notice>
          </Tray>
        </Taskbar>
      </Desktop>
    </>
  );
}
